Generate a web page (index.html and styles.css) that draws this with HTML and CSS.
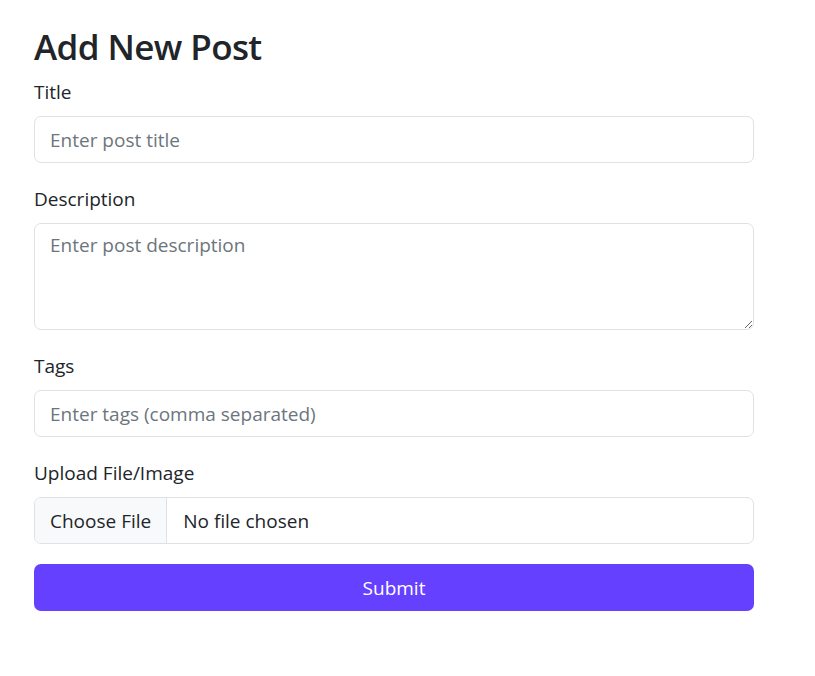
FILE: index.html
```html
<!DOCTYPE html>
<html lang="en">
<head>
<meta charset="utf-8">
<title>Add New Post</title>
<link rel="stylesheet" href="styles.css">
</head>
<body>
<main class="page">
  <h1 class="title">Add New Post</h1>
  <form class="form">
    <div class="group">
      <label class="label" for="t">Title</label>
      <input class="control" id="t" type="text" placeholder="Enter post title">
    </div>
    <div class="group">
      <label class="label" for="d">Description</label>
      <textarea class="control area" id="d" placeholder="Enter post description"></textarea>
    </div>
    <div class="group">
      <label class="label" for="g">Tags</label>
      <input class="control" id="g" type="text" placeholder="Enter tags (comma separated)">
    </div>
    <div class="group">
      <span class="label">Upload File/Image</span>
      <div class="file">
        <span class="file-btn">Choose File</span>
        <span class="file-name">No file chosen</span>
      </div>
    </div>
    <button class="submit" type="button">Submit</button>
  </form>
</main>
</body>
</html>
```
FILE: styles.css
```css
* { box-sizing: border-box; }
html, body { margin: 0; padding: 0; background: #fff; }
body {
  font-family: "Open Sans", "Noto Sans", sans-serif;
  color: #212529;
  font-size: 19px;
}
.page {
  width: 720px;
  margin-left: 34px;
  padding-top: 26px;
}
.title {
  margin: 0 0 8px;
  font-size: 35px;
  line-height: 42px;
  font-weight: 600;
  letter-spacing: -0.6px;
}
.form { display: flex; flex-direction: column; }
.group { display: flex; flex-direction: column; margin-bottom: 20px; }
.label {
  display: block;
  line-height: 32px;
  margin-bottom: 8px;
  font-size: 19px;
}
.control {
  display: block;
  width: 100%;
  height: 47px;
  border: 1px solid #dee2e6;
  border-radius: 7px;
  padding: 7px 15px;
  font-family: inherit;
  font-size: 19px;
  color: #212529;
  background: #fff;
  outline: none;
}
.control::placeholder { color: #6c757d; }
.area { height: 107px; resize: vertical; line-height: 29px; }
.file {
  display: flex;
  height: 47px;
  border: 1px solid #dee2e6;
  border-radius: 7px;
  overflow: hidden;
  align-items: stretch;
}
.file-btn {
  display: flex;
  align-items: center;
  padding: 0 15px;
  background: #f8f9fa;
  border-right: 1px solid #dee2e6;
}
.file-name { display: flex; align-items: center; padding: 0 16px; }
.submit {
  height: 47px;
  width: 100%;
  border: none;
  border-radius: 7px;
  background: #6640ff;
  color: #fff;
  font-family: inherit;
  font-size: 19px;
}
```
